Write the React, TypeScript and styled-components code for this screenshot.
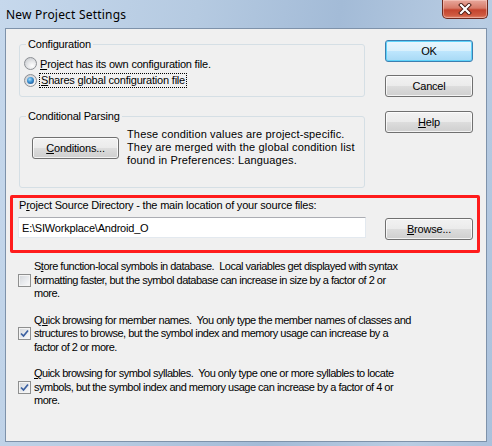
import styled, { createGlobalStyle } from "styled-components";

const GlobalStyle = createGlobalStyle`
  html, body {
    margin: 0;
    padding: 0;
    background: #ffffff;
  }
  body {
    font-family: "Liberation Sans", Arial, sans-serif;
    font-size: 11px;
    color: #000;
  }
`;

const Window = styled.div`
  width: 492px;
  height: 446px;
  box-sizing: border-box;
  display: flex;
  flex-direction: column;
  padding: 0 5px 4px 5px;
  background: linear-gradient(100deg, #c6d8ec 0%, #b5cae1 35%, #a3bbd7 60%, #b9cde3 85%, #aac1dc 100%);
`;

const TitleBar = styled.div`
  height: 28px;
  display: flex;
  align-items: flex-start;
  justify-content: space-between;
`;

const Title = styled.span`
  margin: 7px 0 0 1px;
  font-family: "Noto Sans", "Open Sans", sans-serif;
  font-size: 12px;
  line-height: 16px;
  letter-spacing: 0.2px;
  color: #000;
`;

const CloseButton = styled.div`
  width: 46px;
  height: 19px;
  margin-right: -1px;
  box-sizing: border-box;
  border: 1px solid #6d2a20;
  border-top: none;
  border-radius: 0 0 5px 5px;
  background: linear-gradient(180deg, #e8a89c 0%, #d77a68 45%, #c4442e 55%, #cf5a40 85%, #e0866e 100%);
  box-shadow: inset 0 0 0 1px rgba(255, 220, 210, 0.45);
  display: flex;
  align-items: center;
  justify-content: center;
`;

const Client = styled.div`
  flex: 1;
  border: 1px solid #7e92aa;
  background: #f0f0f0;
  display: flex;
  flex-direction: column;
  letter-spacing: -0.2px;
`;

const TopArea = styled.div`
  display: flex;
  gap: 20px;
  padding: 11px 0 0 13px;
`;

const Groups = styled.div`
  width: 346px;
  margin-top: 4px;
  display: flex;
  flex-direction: column;
  gap: 19px;
`;

const GroupBox = styled.div<{ $pad: string; $height: number }>`
  position: relative;
  box-sizing: border-box;
  height: ${(p) => p.$height}px;
  border: 1px solid #d5dfe5;
  border-radius: 3px;
  padding: ${(p) => p.$pad};
`;

const Legend = styled.span`
  position: absolute;
  top: -7px;
  left: 6px;
  padding: 0 2px;
  background: #f0f0f0;
  line-height: 13px;
  white-space: nowrap;
`;

const RadioRow = styled.label`
  display: flex;
  align-items: center;
  gap: 3px;
  height: 17px;
`;

const Radio = styled.span<{ $checked?: boolean }>`
  position: relative;
  width: 13px;
  height: 13px;
  box-sizing: border-box;
  border-radius: 50%;
  border: 1px solid #8c8f94;
  background: radial-gradient(circle at 65% 70%, #ffffff 0%, #e4e5e7 45%, #bfc2c7 100%);
  flex-shrink: 0;
  &::after {
    content: "";
    display: ${(p) => (p.$checked ? "block" : "none")};
    position: absolute;
    left: 2px;
    top: 2px;
    width: 7px;
    height: 7px;
    border-radius: 50%;
    background: radial-gradient(circle at 40% 35%, #a6ddfa 0%, #3a8fd0 45%, #173f7a 100%);
  }
`;

const Focus = styled.span`
  outline: 1px dotted #000;
  outline-offset: 0;
  padding: 0 1px;
  line-height: 13px;
`;

const Key = styled.u`
  text-decoration-thickness: 1px;
  text-underline-offset: 1px;
`;

const CondRow = styled.div`
  display: flex;
  align-items: center;
  gap: 8px;
`;

const Paragraph = styled.div<{ $lh?: number; $ls?: number }>`
  white-space: pre;
  line-height: ${(p) => p.$lh ?? 13}px;
  letter-spacing: ${(p) => p.$ls ?? -0.2}px;
`;

const ButtonColumn = styled.div`
  display: flex;
  flex-direction: column;
  gap: 13px;
  & > :nth-child(3) {
    margin-top: 1px;
  }
`;

const Button = styled.button<{ $default?: boolean; $w?: number }>`
  width: ${(p) => p.$w ?? 88}px;
  height: 22px;
  box-sizing: border-box;
  padding: 0;
  font-family: "Liberation Sans", Arial, sans-serif;
  font-size: 11px;
  letter-spacing: -0.2px;
  color: #000;
  border-radius: 3px;
  border: 1px solid ${(p) => (p.$default ? "#3c7fb1" : "#707070")};
  background: ${(p) =>
    p.$default
      ? "linear-gradient(180deg, #eaf6fd 0%, #d9f0fc 49%, #bee6fd 50%, #a7d9f5 100%)"
      : "linear-gradient(180deg, #f2f2f2 0%, #ebebeb 49%, #dddddd 50%, #cfcfcf 100%)"};
  box-shadow: ${(p) =>
    p.$default ? "inset 0 0 0 1px #5fd3fa" : "inset 0 0 0 1px rgba(255,255,255,0.75)"};
  flex-shrink: 0;
`;

const Highlight = styled.div`
  margin: 7px 0 0 4px;
  width: 470px;
  box-sizing: border-box;
  border: 3px solid #ff1c1c;
  border-radius: 2px;
  padding: 1px 4px 10px 5px;
`;

const DirLabel = styled.div`
  line-height: 13px;
  padding-left: 1px;
`;

const DirRow = styled.div`
  display: flex;
  align-items: flex-start;
  justify-content: space-between;
  margin-top: 5px;
  & > button {
    margin-top: 1px;
  }
`;

const TextBox = styled.div`
  width: 348px;
  height: 21px;
  box-sizing: border-box;
  border: 1px solid #e3e9ef;
  border-top-color: #abadb3;
  background: #fff;
  padding: 0 3px;
  display: flex;
  align-items: center;
`;

const Options = styled.div`
  display: flex;
  flex-direction: column;
  gap: 13px;
  padding: 7px 0 0 12px;
`;

const Option = styled.label`
  display: flex;
  align-items: center;
  gap: 3px;
`;

const Check = styled.span`
  width: 13px;
  height: 13px;
  box-sizing: border-box;
  border: 1px solid #8e8f8f;
  background: linear-gradient(135deg, #d3d6da 0%, #e9ebee 55%, #fafafa 100%);
  box-shadow: inset 0 0 0 1px #f4f4f4;
  flex-shrink: 0;
  display: flex;
  align-items: center;
  justify-content: center;
`;

function CloseGlyph() {
  return (
    <svg width="14" height="12" viewBox="0 0 14 12">
      <path d="M3 2 L11 10 M11 2 L3 10" stroke="#4a1a12" strokeWidth="4" strokeLinecap="square" />
      <path d="M3 2 L11 10 M11 2 L3 10" stroke="#ffffff" strokeWidth="2.2" strokeLinecap="square" />
    </svg>
  );
}

function CheckMark() {
  return (
    <svg width="9" height="9" viewBox="0 0 9 9">
      <path d="M1 4.5 L3.5 7 L8 1.5" fill="none" stroke="#3a5fa0" strokeWidth="1.7" />
    </svg>
  );
}

const options = [
  {
    checked: false,
    lines: [
      <>
        S<Key>t</Key>ore function-local symbols in database.  Local variables get displayed with syntax
      </>,
      "formatting faster, but the symbol database can increase in size by a factor of 2 or",
      "more.",
    ],
  },
  {
    checked: true,
    lines: [
      <>
        Q<Key>u</Key>ick browsing for member names.  You only type the member names of classes and
      </>,
      "structures to browse, but the symbol index and memory usage can increase by a",
      "factor of 2 or more.",
    ],
  },
  {
    checked: true,
    lines: [
      <>
        <Key>Q</Key>uick browsing for symbol syllables.  You only type one or more syllables to locate
      </>,
      "symbols, but the symbol index and memory usage can increase by a factor of 4 or",
      "more.",
    ],
  },
];

export default function App() {
  return (
    <>
      <GlobalStyle />
      <Window>
        <TitleBar>
          <Title>New Project Settings</Title>
          <CloseButton>
            <CloseGlyph />
          </CloseButton>
        </TitleBar>
        <Client>
          <TopArea>
            <Groups>
              <GroupBox $pad="10px 0 0 4px" $height={53}>
                <Legend>Configuration</Legend>
                <RadioRow>
                  <Radio />
                  <span>
                    <Key>P</Key>roject has its own configuration file.
                  </span>
                </RadioRow>
                <RadioRow>
                  <Radio $checked />
                  <Focus>
                    <Key>S</Key>hares global configuration file
                  </Focus>
                </RadioRow>
              </GroupBox>
              <GroupBox $pad="11px 0 0 12px" $height={72}>
                <Legend>Conditional Parsing</Legend>
                <CondRow>
                  <Button $w={87}>
                    <Key>C</Key>onditions...
                  </Button>
                  <Paragraph $ls={0.15}>
                    {"These condition values are project-specific.\nThey are merged with the global condition list\nfound in Preferences: Languages."}
                  </Paragraph>
                </CondRow>
              </GroupBox>
            </Groups>
            <ButtonColumn>
              <Button $default>OK</Button>
              <Button>Cancel</Button>
              <Button>
                <Key>H</Key>elp
              </Button>
            </ButtonColumn>
          </TopArea>
          <Highlight>
            <DirLabel>
              P<Key>r</Key>oject Source Directory - the main location of your source files:
            </DirLabel>
            <DirRow>
              <TextBox>E:\SIWorkplace\Android_O</TextBox>
              <Button>
                <Key>B</Key>rowse...
              </Button>
            </DirRow>
          </Highlight>
          <Options>
            {options.map((o, i) => (
              <Option key={i}>
                <Check>{o.checked && <CheckMark />}</Check>
                <Paragraph $lh={13.5} $ls={-0.5}>
                  {o.lines.map((l, j) => (
                    <div key={j}>{l}</div>
                  ))}
                </Paragraph>
              </Option>
            ))}
          </Options>
        </Client>
      </Window>
    </>
  );
}
